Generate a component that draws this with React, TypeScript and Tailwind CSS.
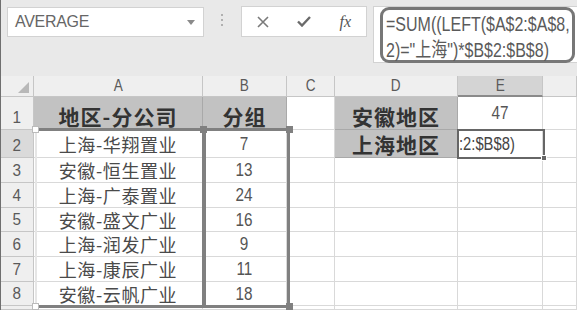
import React from "react";

const dataRows: [string, string][] = [
  ["上海-华翔置业", "7"],
  ["安徽-恒生置业", "13"],
  ["上海-广泰置业", "24"],
  ["安徽-盛文广业", "16"],
  ["上海-润发广业", "9"],
  ["上海-康辰广业", "11"],
  ["安徽-云帆广业", "18"],
];

const cjk = "font-['Noto_Sans_CJK_SC',sans-serif]";
const lat = "font-['Liberation_Sans','Noto_Sans_CJK_SC',sans-serif]";

function Cell({ className = "", children }: { className?: string; children?: React.ReactNode }) {
  return <div className={`border-r border-b border-[#d9d9d9] flex items-center justify-center overflow-hidden leading-[20px] ${className}`}>{children}</div>;
}

function RowHead({ n, active = false }: { n: string; active?: boolean }) {
  return (
    <div
      className={`border-r border-b border-[#c6c6c6] flex items-end justify-center pb-[2px] ${active ? "bg-[#dadada]" : "bg-[#efefef]"} ${lat} text-[17px] leading-[18px] text-[#5a5a5a]`}
    >
      <span className="inline-block scale-x-[0.9]">{n}</span>
    </div>
  );
}

function ColHead({ l, active = false }: { l: string; active?: boolean }) {
  return (
    <div
      className={`flex items-center justify-center border-r border-[#c6c6c6] ${active ? "bg-[#d4d4d4] border-b-2 border-b-[#8a8a8a]" : "bg-[#efefef] border-b border-b-[#c6c6c6]"} ${lat} text-[16px] leading-[18px] text-[#5a5a5a]`}
    >
      <span className="inline-block scale-x-[0.85]">{l}</span>
    </div>
  );
}

function Num({ v }: { v: string }) {
  return <span className={`inline-block scale-x-[0.85] ${lat} text-[18px] leading-[20px] text-[#555]`}>{v}</span>;
}

function GrayHead({ t, tall = false }: { t: string; tall?: boolean }) {
  return (
    <div className={`bg-[#c2c2c2] border-r border-b border-[#a9a9a9] flex items-center justify-center ${tall ? "pt-[5px]" : "pt-[1px]"} overflow-hidden ${cjk} font-bold text-[21px] leading-[24px] tracking-[1px] text-[#333]`}>
      {t}
    </div>
  );
}

export default function App() {
  return (
    <div className="w-[577px] h-[310px] overflow-hidden bg-white border-l border-[#6f6f6f] flex flex-col select-none">
      {/* Toolbar */}
      <div className="h-[76px] bg-[#e9e9e9] flex items-start shrink-0">
        <div className="ml-[6px] mt-[7px] w-[197px] h-[30px] bg-white border border-[#d2d2d2] flex items-center justify-between pl-[7px] pr-[8px]">
          <span className={`${lat} text-[16px] text-[#666] tracking-[-0.3px]`}>AVERAGE</span>
          <svg width="8" height="5" viewBox="0 0 8 5">
            <polygon points="0,0 8,0 4,5" fill="#8a8a8a" />
          </svg>
        </div>
        <div className="ml-[17px] mt-[14px] flex flex-col gap-[3px]">
          <div className="w-[2px] h-[2px] bg-[#b0b0b0]" />
          <div className="w-[2px] h-[2px] bg-[#b0b0b0]" />
          <div className="w-[2px] h-[2px] bg-[#b0b0b0]" />
        </div>
        <div className="ml-[18px] mt-[6px] w-[126px] h-[31px] bg-white border border-[#d2d2d2] flex items-center">
          <div className="w-[42px] flex justify-center">
            <svg width="12" height="12" viewBox="0 0 12 12">
              <path d="M1 1 L11 11 M11 1 L1 11" stroke="#7a7a7a" strokeWidth="1.6" />
            </svg>
          </div>
          <div className="w-[42px] flex justify-center">
            <svg width="14" height="11" viewBox="0 0 14 11">
              <path d="M1 5.5 L5 9.5 L13 1" stroke="#6a6a6a" strokeWidth="2.4" fill="none" />
            </svg>
          </div>
          <div className="w-[42px] flex justify-center">
            <span className="font-['Liberation_Serif',serif] italic text-[16px] text-[#555]">fx</span>
          </div>
        </div>
        <div className="ml-[6px] mt-[6px] flex-1 h-[57px] bg-white border border-[#d2d2d2] border-r-0 pl-[6px]">
          <div className="w-[195px] h-[56px] border-[3px] border-[#777] rounded-[9px] pl-[3px] pt-[1px]">
            <div className={`${lat} text-[20px] leading-[26px] text-[#5a5a5a] whitespace-nowrap`}>
              <div className="inline-block origin-left scale-x-[0.8]">=SUM((LEFT($A$2:$A$8,</div>
              <div className="block origin-left scale-x-[0.8]">2)="上海")*$B$2:$B$8)</div>
            </div>
          </div>
        </div>
      </div>

      {/* Sheet */}
      <div className="relative flex-1 grid grid-cols-[33px_169px_84px_48px_123px_85px_1fr] grid-rows-[21px_33px_28px_25px_25px_24px_25px_25px_24px_1fr]">
        {/* header row */}
        <div className="bg-[#efefef] border-r border-b border-[#c6c6c6] flex items-end justify-end pr-[4px] pb-[3px]">
          <svg width="11" height="11" viewBox="0 0 11 11">
            <polygon points="11,0 11,11 0,11" fill="#b8b8b8" />
          </svg>
        </div>
        <ColHead l="A" />
        <ColHead l="B" />
        <ColHead l="C" />
        <ColHead l="D" />
        <ColHead l="E" active />
        <ColHead l="" />

        {/* row 1 */}
        <RowHead n="1" />
        <GrayHead t="地区-分公司" tall />
        <GrayHead t="分组" tall />
        <Cell />
        <GrayHead t="安徽地区" tall />
        <Cell>
          <Num v="47" />
        </Cell>
        <Cell />

        {/* rows 2-8 */}
        {dataRows.map(([name, val], i) => (
          <React.Fragment key={i}>
            <RowHead n={String(i + 2)} active={i === 0} />
            <Cell className={`${cjk} text-[18px] tracking-[0.6px] text-[#4a4a4a]`}>{name}</Cell>
            <Cell>
              <Num v={val} />
            </Cell>
            <Cell />
            {i === 0 ? <GrayHead t="上海地区" /> : <Cell />}
            {i === 0 ? (
              <Cell className="justify-start pl-[1px]">
                <span className={`inline-block origin-left scale-x-[0.82] whitespace-nowrap ${lat} text-[18px] text-[#444]`}>:2:$B$8)</span>
              </Cell>
            ) : (
              <Cell />
            )}
            <Cell />
          </React.Fragment>
        ))}

        {/* row 9 partial */}
        <RowHead n="" />
        <Cell />
        <Cell />
        <Cell />
        <Cell />
        <Cell />
        <Cell />

        {/* range highlights */}
        <div className="absolute left-[34px] top-[52px] w-[170px] h-[180px] border-t-[3px] border-b-[3px] border-r-[3px] border-[#808080] border-l-[2px] border-l-[#e6e6e6]" />
        <div className="absolute left-[202px] top-[52px] w-[87px] h-[180px] border-[3px] border-[#808080]" />
        <div className="absolute left-[31px] top-[50px] w-[7px] h-[7px] bg-white border border-[#bbbbbb]" />
        <div className="absolute left-[199px] top-[50px] w-[7px] h-[7px] bg-[#808080]" />
        <div className="absolute left-[285px] top-[50px] w-[7px] h-[7px] bg-[#808080]" />
        <div className="absolute left-[285px] top-[227px] w-[7px] h-[7px] bg-[#808080]" />
        <div className="absolute left-[31px] top-[227px] w-[7px] h-[7px] bg-white border border-[#bbbbbb]" />

        {/* selected cell E2 */}
        <div className="absolute left-[456px] top-[53px] w-[88px] h-[30px] border-2 border-[#666]" />
        <div className="absolute left-[540px] top-[79px] w-[6px] h-[6px] bg-[#666] border border-white" />
      </div>
    </div>
  );
}
